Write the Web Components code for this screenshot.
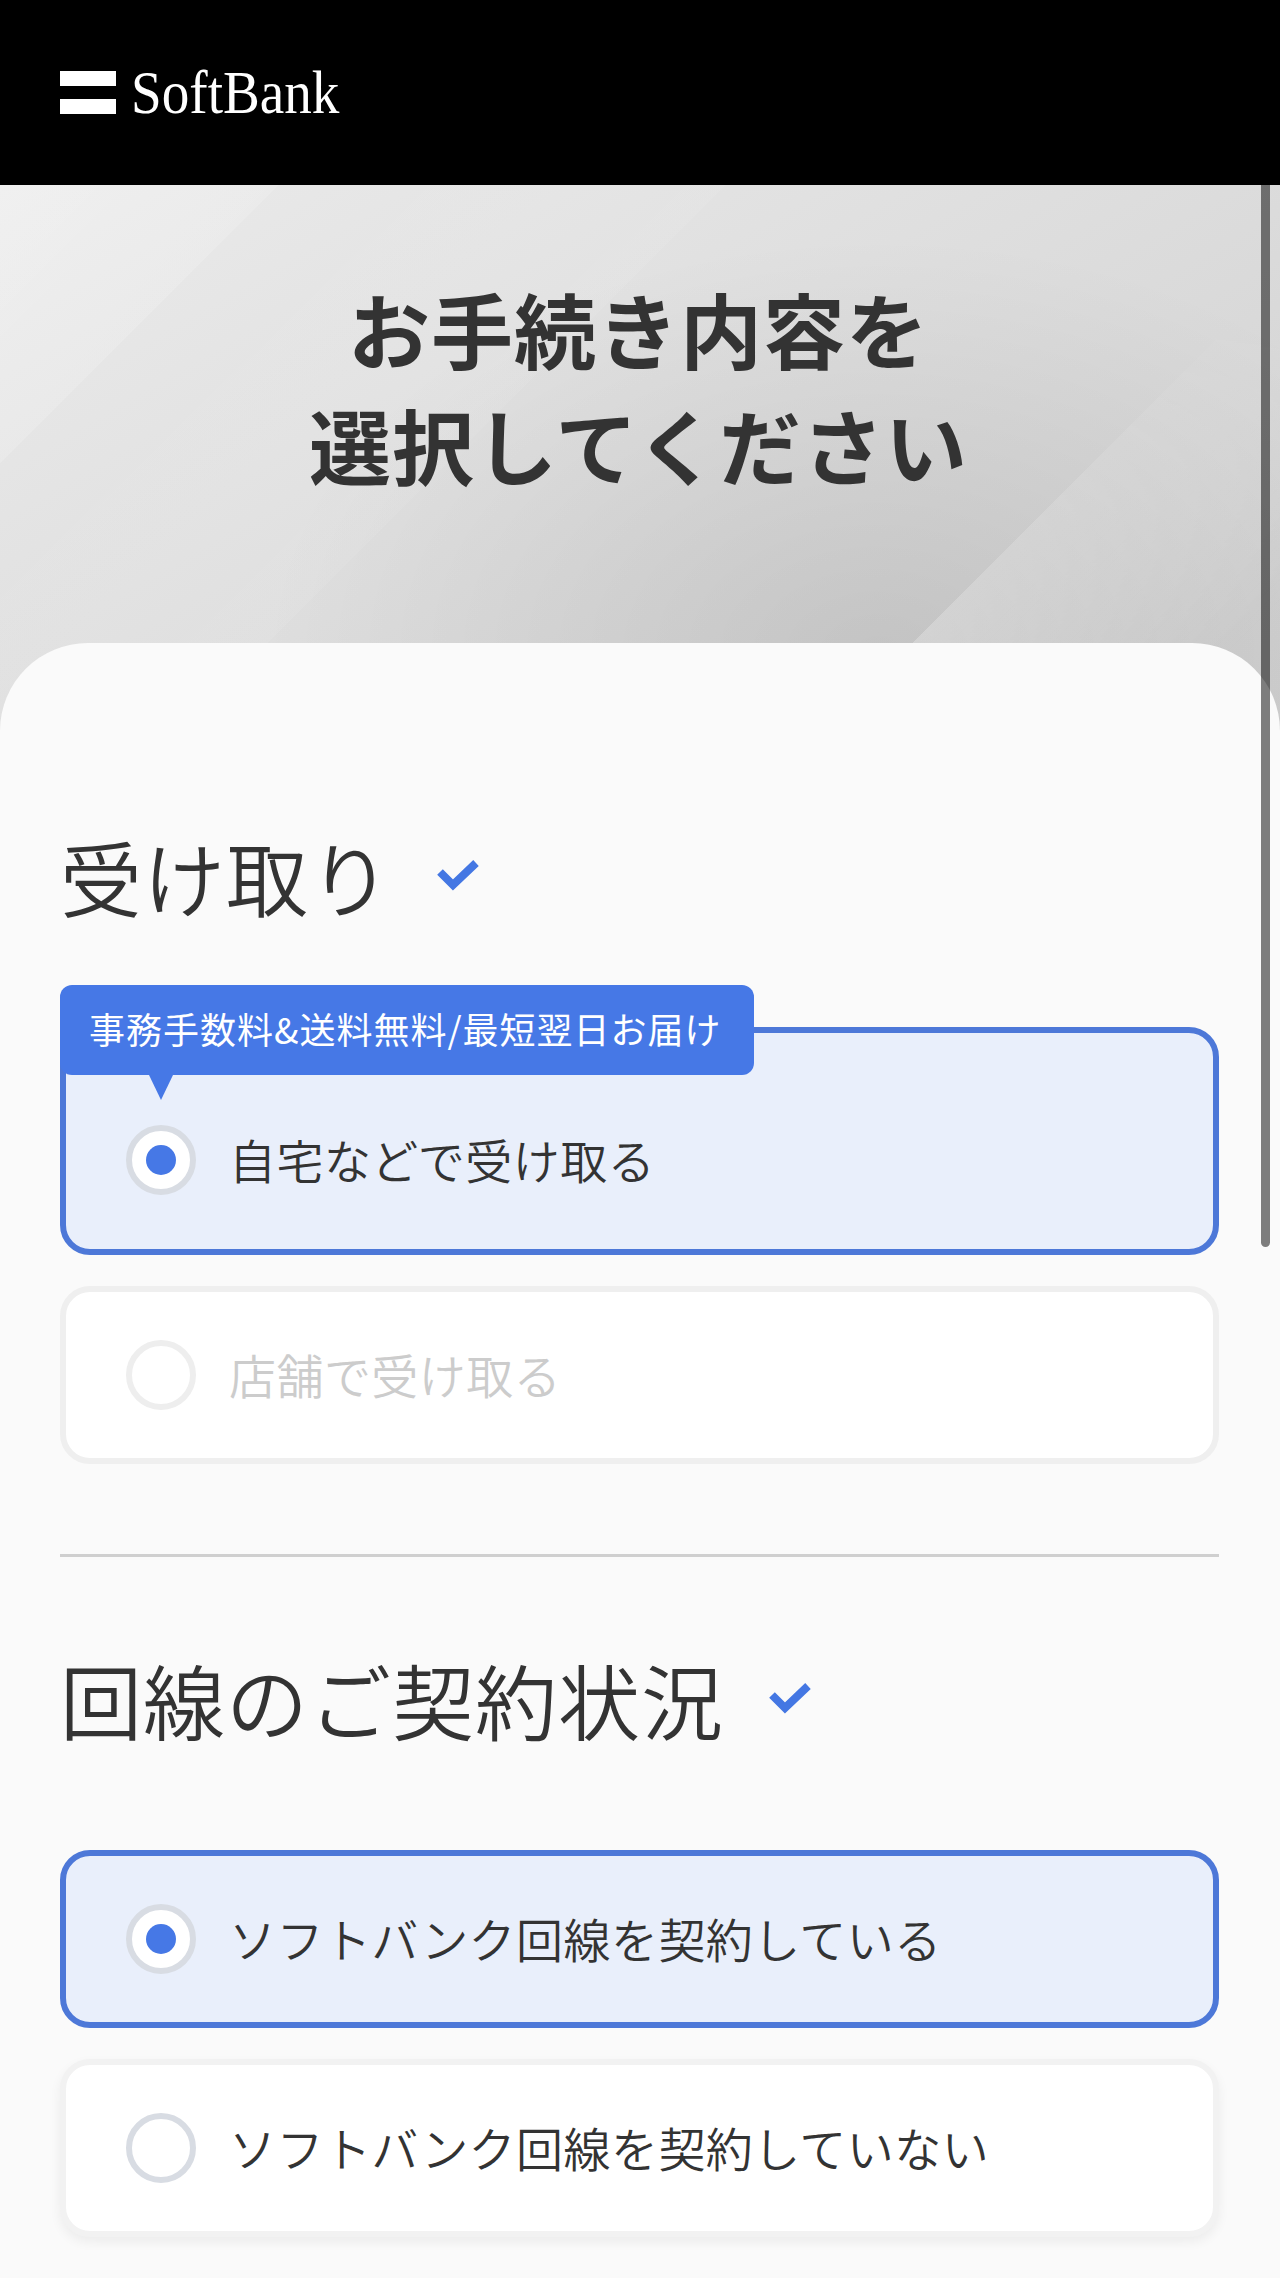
<!DOCTYPE html>
<html lang="ja">
<head>
<meta charset="utf-8">
<title>SoftBank</title>
<style>
  html, body { margin: 0; padding: 0; background: #fafafa; }
  body { width: 1280px; height: 2278px; overflow: hidden; position: relative; font-family: "Noto Sans CJK JP", "Noto Sans", sans-serif; color: #333; }
</style>
</head>
<body>
<sb-header></sb-header>
<sb-hero>お手続き内容を<br>選択してください</sb-hero>
<sb-panel>
  <sb-section first heading="受け取り">
    <sb-option selected badged>
      <sb-badge slot="badge">事務手数料&amp;送料無料/最短翌日お届け</sb-badge>
      自宅などで受け取る
    </sb-option>
    <sb-option disabled>店舗で受け取る</sb-option>
  </sb-section>
  <sb-section heading="回線のご契約状況">
    <sb-option selected>ソフトバンク回線を契約している</sb-option>
    <sb-option raised>ソフトバンク回線を契約していない</sb-option>
  </sb-section>
</sb-panel>
<sb-scrollbar></sb-scrollbar>

<script>
class SbHeader extends HTMLElement {
	constructor() {
		super();
		this.attachShadow({ mode: "open" }).innerHTML = `
		<style>
		:host { display: flex; align-items: center; height: 185px; background: #000; padding-left: 60px; box-sizing: border-box; }
		.bars { display: flex; flex-direction: column; gap: 13px; width: 56px; margin-top: -1px; }
		.bars i { display: block; height: 15px; background: #fff; }
		.name { font-family: "Liberation Serif", serif; font-size: 62px; line-height: 62px; color: #fff; margin-left: 15px; width: 234px; transform: scaleX(.89); transform-origin: 0 50%; white-space: nowrap; margin-top: -2px; }
		</style>
		<div class="bars"><i></i><i></i></div>
		<div class="name">SoftBank</div>`;
	}
}

class SbHero extends HTMLElement {
	constructor() {
		super();
		this.attachShadow({ mode: "open" }).innerHTML = `
		<style>
		:host {
			display: block; position: relative; height: 548px; box-sizing: border-box; padding: 85px 3px 0 0;
			background:
				radial-gradient(620px 420px at 880px 470px, rgba(0,0,0,.09), rgba(0,0,0,0)),
				linear-gradient(135deg, rgba(255,255,255,.25) 0, rgba(255,255,255,.15) 197px, rgba(255,255,255,0) 197px, rgba(255,255,255,.06) 513px, rgba(255,255,255,0) 513px),
				linear-gradient(150deg, #ebebeb, #d0d0d0);
		}
		:host::before {
			content: ""; position: absolute; inset: 0;
			background: linear-gradient(135deg, rgba(255,255,255,0) 969px, rgba(255,255,255,.25) 969px, rgba(255,255,255,0) 1200px);
			-webkit-mask-image: linear-gradient(to bottom, transparent 120px, #000 458px);
			mask-image: linear-gradient(to bottom, transparent 120px, #000 458px);
		}
		h1 { position: relative; margin: 0; text-align: center; font-size: 82px; line-height: 116px; font-weight: 700; color: #333; letter-spacing: 1px; }
		</style>
		<h1><slot></slot></h1>`;
	}
}

class SbPanel extends HTMLElement {
	constructor() {
		super();
		this.attachShadow({ mode: "open" }).innerHTML = `
		<style>
		:host { display: block; margin-top: -90px; position: relative; background: #fafafa; border-radius: 88px 88px 0 0; padding: 183px 61px 0 60px; }
		</style>
		<slot></slot>`;
	}
}

class SbSection extends HTMLElement {
	constructor() {
		super();
		this.attachShadow({ mode: "open" }).innerHTML = `
		<style>
		:host { display: block; }
		:host(:not([first])) { border-top: 3px solid #cfcfcf; margin-top: 90px; padding-top: 92px; }
		h2 { display: flex; align-items: center; gap: 44px; margin: 0 0 101px; height: 100px; font-size: 82px; line-height: 100px; font-weight: 350; color: #333; letter-spacing: 1px; }
		svg { width: 44px; height: 32px; flex: none; margin-top: -2px; }
		.list { display: flex; flex-direction: column; gap: 31px; }
		</style>
		<h2><span id="t"></span><svg viewBox="0 0 44 32"><path d="M4 13 L17 26 L40 4" fill="none" stroke="#4477e3" stroke-width="8"/></svg></h2>
		<div class="list"><slot></slot></div>`;
		this.shadowRoot.getElementById("t").textContent = this.getAttribute("heading");
	}
}

class SbOption extends HTMLElement {
	constructor() {
		super();
		this.attachShadow({ mode: "open" }).innerHTML = `
		<style>
		:host {
			display: flex; align-items: center; gap: 33px; position: relative; box-sizing: border-box;
			height: 178px; padding: 0 60px; border: 6px solid #efefef; border-radius: 30px;
			background: #fff; font-size: 47px; letter-spacing: .45px; font-weight: 350; color: #333;
		}
		:host([selected]) { background: #e9effb; border-color: #4d78d8; }
		:host([disabled]) { color: #ccc; }
		:host([raised]) { box-shadow: 0 5px 12px rgba(0,0,0,.06); border-color: #f2f2f2; }
		:host([badged]) { height: 228px; padding-top: 38px; }
		.radio { flex: none; width: 70px; height: 70px; box-sizing: border-box; border: 6px solid #d8dce3; border-radius: 50%; background: #fff; display: flex; align-items: center; justify-content: center; }
		:host([disabled]) .radio { border-color: #eeeeee; }
		.dot { display: none; width: 30px; height: 30px; border-radius: 50%; background: #4678e6; }
		:host([selected]) .dot { display: block; }
		.label { margin-top: -3px; }
		</style>
		<slot name="badge"></slot>
		<div class="radio"><div class="dot"></div></div>
		<div class="label"><slot></slot></div>`;
	}
}

class SbBadge extends HTMLElement {
	constructor() {
		super();
		this.attachShadow({ mode: "open" }).innerHTML = `
		<style>
		:host {
			display: block; position: absolute; left: -6px; top: -48px; height: 90px; box-sizing: border-box;
			padding: 0 32px 0 29px; line-height: 87px; border-radius: 12px; background: #4678e6; color: #fff;
			font-size: 36px; letter-spacing: 1px; font-weight: 400; white-space: nowrap;
		}
		:host::after { content: ""; position: absolute; left: 89px; top: 90px; width: 24px; height: 25px; background: #4678e6; clip-path: polygon(0 0, 100% 0, 50% 100%); }
		</style>
		<slot></slot>`;
	}
}

class SbScrollbar extends HTMLElement {
	constructor() {
		super();
		this.attachShadow({ mode: "open" }).innerHTML = `
		<style>
		:host { display: block; position: absolute; left: 1261px; top: 185px; width: 9px; height: 1062px; background: rgba(0,0,0,.5); border-radius: 0 0 5px 5px; }
		</style>`;
	}
}

customElements.define("sb-header", SbHeader);
customElements.define("sb-hero", SbHero);
customElements.define("sb-panel", SbPanel);
customElements.define("sb-section", SbSection);
customElements.define("sb-option", SbOption);
customElements.define("sb-badge", SbBadge);
customElements.define("sb-scrollbar", SbScrollbar);
</script>
</body>
</html>
